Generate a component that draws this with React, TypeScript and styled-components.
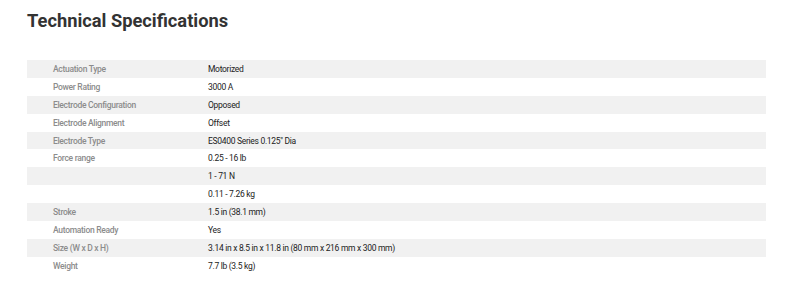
import React from "react";
import styled, { createGlobalStyle } from "styled-components";

const Global = createGlobalStyle`
  html, body { margin: 0; padding: 0; background: #ffffff; }
  body { font-family: Roboto, "Liberation Sans", sans-serif; }
`;

const Page = styled.div`
  width: 800px;
  height: 286px;
  box-sizing: border-box;
  padding: 9px 34px 0 27px;
`;

const Title = styled.h2`
  margin: 0 0 27px 0;
  font-size: 18.3px;
  line-height: 24px;
  font-weight: 700;
  color: #333333;
`;

const Table = styled.div`
  display: flex;
  flex-direction: column;
  width: 739px;
`;

const Row = styled.div<{ $shaded: boolean }>`
  display: grid;
  grid-template-columns: 181px 1fr;
  height: 17.9px;
  align-items: center;
  background: ${(p) => (p.$shaded ? "#f1f1f1" : "transparent")};
  font-size: 8.5px;
  letter-spacing: -0.3px;
`;

const Label = styled.div`
  padding-left: 26px;
  color: #8c8c8c;
  font-weight: 500;
`;

const Value = styled.div`
  color: #222222;
  font-weight: 400;
`;

const rows: [string, string][] = [
  ["Actuation Type", "Motorized"],
  ["Power Rating", "3000 A"],
  ["Electrode Configuration", "Opposed"],
  ["Electrode Alignment", "Offset"],
  ["Electrode Type", "ES0400 Series 0.125\" Dia"],
  ["Force range", "0.25 - 16 lb"],
  ["", "1 - 71 N"],
  ["", "0.11 - 7.26 kg"],
  ["Stroke", "1.5 in (38.1 mm)"],
  ["Automation Ready", "Yes"],
  ["Size (W x D x H)", "3.14 in x 8.5 in x 11.8 in (80 mm x 216 mm x 300 mm)"],
  ["Weight", "7.7 lb (3.5 kg)"],
];

export default function App() {
  return (
    <>
      <Global />
      <Page>
        <Title>Technical Specifications</Title>
        <Table>
          {rows.map(([l, v], i) => (
            <Row key={i} $shaded={i % 2 === 0}>
              <Label>{l}</Label>
              <Value>{v}</Value>
            </Row>
          ))}
        </Table>
      </Page>
    </>
  );
}
